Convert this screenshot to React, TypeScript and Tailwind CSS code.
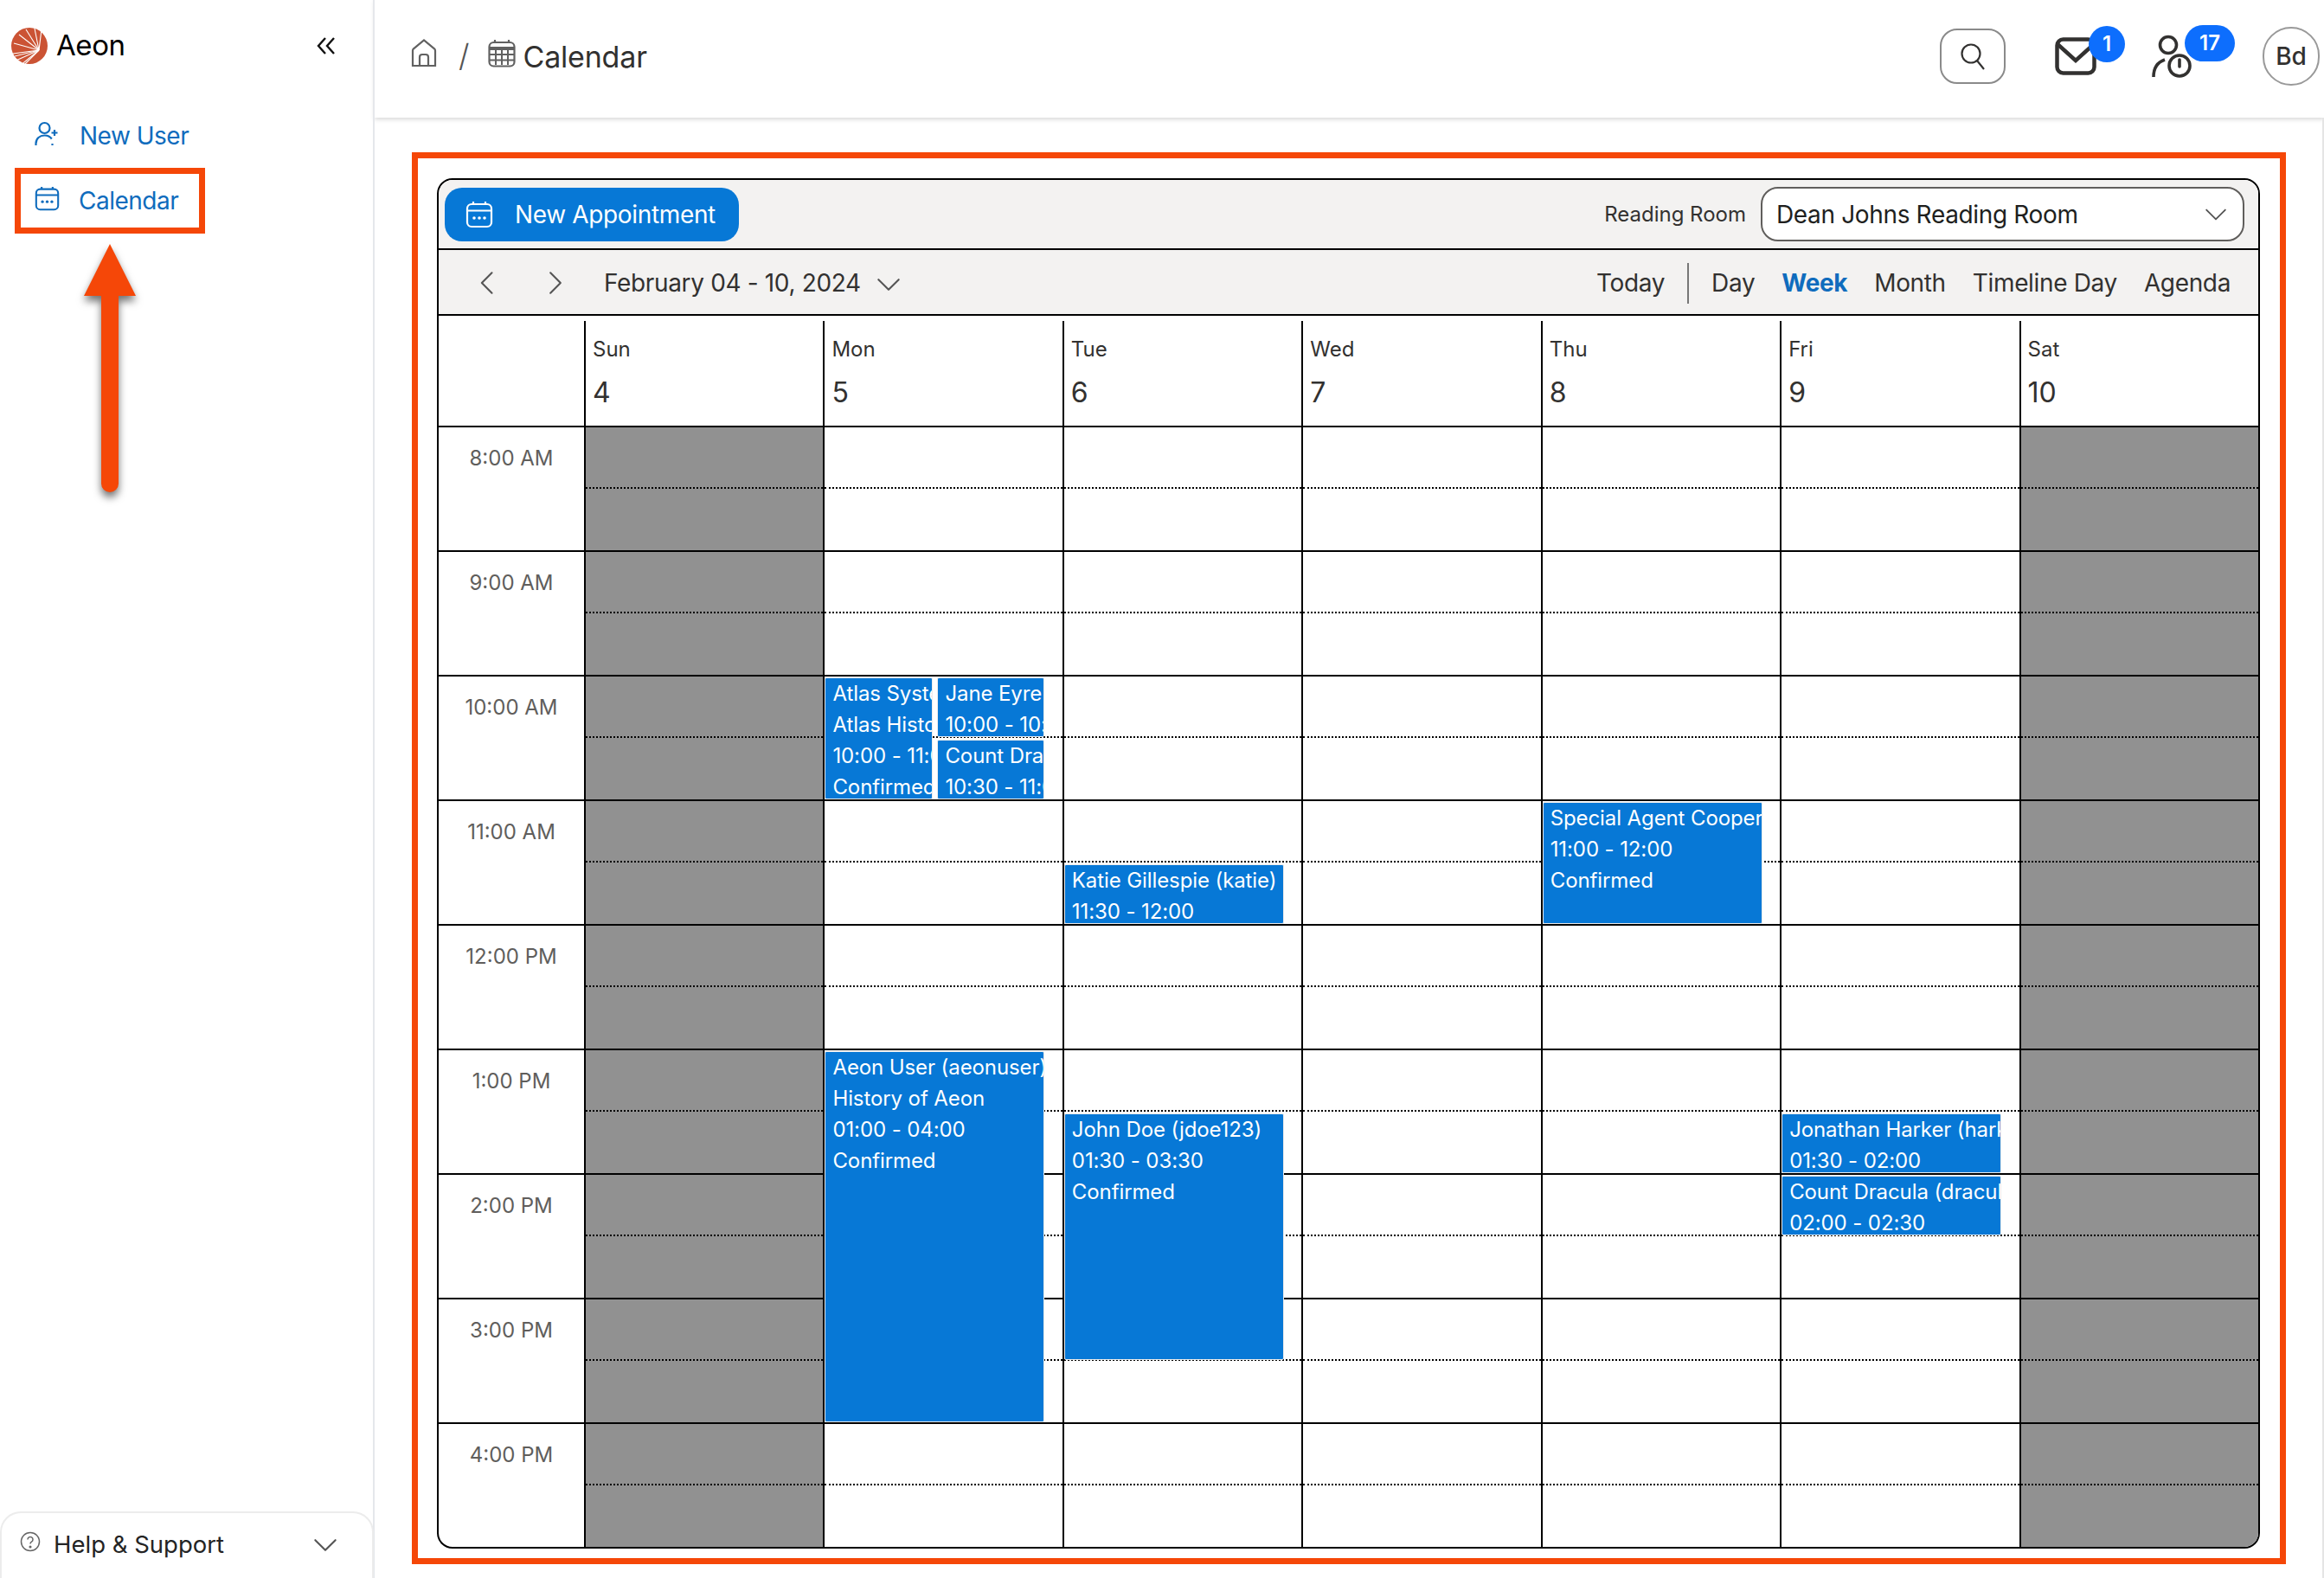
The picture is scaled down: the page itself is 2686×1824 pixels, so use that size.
import React from "react";

const font = { fontFamily: "Inter, 'Noto Sans', sans-serif" };

function Logo() {
  const rays: [number, number][] = [
    [2, 30], [3, 18], [9, 8], [17, 2], [27, 1], [35, 2], [1, 40], [10, 44],
  ];
  return (
    <svg width="42" height="42" viewBox="0 0 42 42" className="shrink-0">
      <circle cx="21" cy="21" r="21" fill="#cb5334" />
      {rays.map(([x, y], i) => (
        <line key={i} x1="32" y1="26" x2={x} y2={y} stroke="#fff" strokeWidth="1.1" />
      ))}
      <line x1="32" y1="26" x2="4" y2="33" stroke="#fff" strokeWidth="1" />
      <line x1="32" y1="26" x2="16" y2="42" stroke="#fff" strokeWidth="1.1" />
    </svg>
  );
}

function CalDots({ color, size = 32, sw = 2.2, className = "" }: { color: string; size?: number; sw?: number; className?: string }) {
  return (
    <svg width={size} height={size} viewBox="0 0 32 32" fill="none" stroke={color} strokeWidth={sw} className={`shrink-0 ${className}`}>
      <rect x="2" y="4" width="28" height="26" rx="5" />
      <path d="M2 11.5H30M9 1V4M23 1V4" />
      <g fill={color} stroke="none">
        <circle cx="10" cy="20" r="1.8" />
        <circle cx="16" cy="20" r="1.8" />
        <circle cx="22" cy="20" r="1.8" />
      </g>
    </svg>
  );
}

function UserPlus() {
  return (
    <svg width="30" height="30" viewBox="0 0 30 30" fill="none" stroke="#0f6cbd" strokeWidth="2.2" className="shrink-0 -mt-[4px]">
      <circle cx="11.5" cy="8" r="6" />
      <path d="M1.5 28v-2c0-6 4.5-9.5 10-9.5 3.5 0 6.5 1.5 8.3 4M20.5 28v-2" />
      <path d="M23 10v7M19.5 13.500h7" />
    </svg>
  );
}

function Chevron({ dir, size, color, sw = 2 }: { dir: "l" | "r" | "d"; size: number; color: string; sw?: number }) {
  const d = dir === "l" ? "M15 2 5 12l10 10" : dir === "r" ? "M7 2l10 10L7 22" : "M2 7l10 10L22 7";
  return (
    <svg width={size} height={size} viewBox="0 0 24 24" fill="none" stroke={color} strokeWidth={sw} strokeLinecap="round" strokeLinejoin="round" className="shrink-0">
      <path d={d} />
    </svg>
  );
}

function Arrow() {
  return (
    <svg width="100" height="320" viewBox="0 0 100 320" className="absolute left-[77px] top-[272px] drop-shadow-[0_6px_5px_rgba(0,0,0,0.55)]">
      <path d="M50 10 80 70H60V287a10 10 0 0 1-20 0V70H20Z" fill="#f54708" />
    </svg>
  );
}

function Sidebar() {
  return (
    <aside className="relative w-[433px] shrink-0 border-r-2 border-[#e5e7eb] flex flex-col">
      <div className="flex items-center h-[106px] pl-[13px] pr-[43px]">
        <Logo />
        <span className="ml-[10px] text-[33px] text-black -tracking-[0.4px]">Aeon</span>
        <svg width="22" height="20" viewBox="0 0 22 20" fill="none" stroke="#111" strokeWidth="2.4" className="ml-auto">
          <path d="M10 1 2 10l8 9M20 1l-8 9 8 9" />
        </svg>
      </div>
      <div className="flex items-center h-[50px] pl-[40px] gap-[22px] mt-[26px] text-[28px] tracking-[-0.5px] text-[#0f6cbd]">
        <UserPlus />
        <span>New User</span>
      </div>
      <div className="flex items-center w-[220px] h-[76px] ml-[17px] mt-[12px] pl-[16px] gap-[22px] border-[7px] border-[#f54708] text-[28px] tracking-[-0.5px] text-[#0f6cbd]">
        <CalDots color="#0f6cbd" size={29} sw={2.300} className="-mt-[6px]" />
        <span>Calendar</span>
      </div>
      <Arrow />
      <div className="mt-auto h-[77px] rounded-t-[24px] border-2 border-b-0 border-[#ececec] flex items-center pb-[2px] pl-[21px] pr-[40px] text-[27.5px] text-[#242424] -mr-[1px]">
        <svg width="24" height="24" viewBox="0 0 24 24" fill="none" stroke="#666" strokeWidth="1.500" className="shrink-0 -mt-[7px]">
          <circle cx="12" cy="12" r="10.500" />
          <path d="M9 9.500a3 3 0 1 1 4.500 2.600c-1 .6-1.500 1.200-1.500 2.400" />
          <circle cx="12" cy="18" r=".8" fill="#666" />
        </svg>
        <span className="ml-[15px]">Help &amp; Support</span>
        <span className="ml-auto"><Chevron dir="d" size={28} color="#555" sw={1.800} /></span>
      </div>
    </aside>
  );
}

function TopBar() {
  return (
    <header className="h-[136px] shrink-0 flex items-center pb-[6px] pl-[41px] pr-[5px] shadow-[0_2px_5px_rgba(0,0,0,0.16)] text-[#323130]">
      <svg width="32" height="33" viewBox="0 0 32 33" fill="none" stroke="#616161" strokeWidth="2.200" className="shrink-0 -mt-[8px]">
        <path d="M3 31h26a2 2 0 0 0 0 0V13.500a3 3 0 0 0-1-2.200L16 1.500 4 11.300a3 3 0 0 0-1 2.200V31Z" />
        <path d="M11 31V21a3 3 0 0 1 3-3h4a3 3 0 0 1 3 3v10" />
      </svg>
      <span className="ml-[24px] text-[36px] font-light text-[#555] -mt-[2px]">/</span>
      <svg width="32" height="33" viewBox="0 0 32 33" fill="none" stroke="#616161" strokeWidth="2.200" className="ml-[21px] shrink-0 -mt-[8px]">
        <rect x="1.500" y="4" width="29" height="27.500" rx="5" />
        <path d="M1.500 11h29" strokeWidth="4" />
        <path d="M8 1v4M24 1v4" />
        <path d="M9 13v17M16 13v17M23 13v17M2 18h28M2 24.500h28" strokeWidth="2" />
      </svg>
      <span className="ml-[9px] text-[34px] text-[#323130] -tracking-[0.2px]">Calendar</span>
      <div className="ml-auto flex items-center">
        <button className="w-[76px] h-[64px] rounded-[20px] border-2 border-[#8a8a8a] flex items-center justify-center">
          <svg width="30" height="32" viewBox="0 0 30 32" fill="none" stroke="#323130" strokeWidth="2.200">
            <circle cx="13" cy="13" r="10.500" />
            <path d="M20 21l8 10" />
          </svg>
        </button>
        <div className="relative ml-[57px] w-[48px] h-[44px]">
          <svg width="48" height="44" viewBox="0 0 48 44" fill="none" stroke="#323130" strokeWidth="4.500">
            <rect x="2.500" y="2.500" width="43" height="39" rx="7" />
            <path d="M3 8l21 19L45 8" />
          </svg>
          <span className="absolute left-[39px] -top-[13px] w-[42px] h-[42px] rounded-full bg-[#0d6efd] text-white text-[24px] font-semibold flex items-center justify-center">1</span>
        </div>
        <div className="relative ml-[64px] w-[50px] h-[50px]">
          <svg width="50" height="50" viewBox="0 0 50 50" fill="none" stroke="#323130" strokeWidth="3.600">
            <circle cx="19" cy="12" r="9.500" />
            <path d="M2 49c0-11 4-17 13-20" />
            <circle cx="32" cy="36" r="12" />
            <path d="M32 29v8" strokeLinecap="round" />
          </svg>
          <span className="absolute left-[38px] -top-[11px] w-[58px] h-[42px] rounded-full bg-[#0d6efd] text-white text-[24px] font-semibold flex items-center justify-center">17</span>
        </div>
        <div className="ml-[78px] w-[66px] h-[68px] rounded-full border-2 border-[#999] flex items-center justify-center text-[28px] font-medium text-[#323130]">Bd</div>
      </div>
    </header>
  );
}

type Ev = { top: number; h: number; left: number; w: number; lines: string[] };

const days: { n: string; d: number; off?: boolean; ev?: Ev[] }[] = [
  { n: "Sun", d: 4, off: true },
  {
    n: "Mon", d: 5,
    ev: [
      { top: 291, h: 141, left: 0, w: 125, lines: ["Atlas Systems (atlas)", "Atlas History of Aeon", "10:00 - 11:00", "Confirmed"] },
      { top: 291, h: 69, left: 130, w: 124, lines: ["Jane Eyre (jeyre)", "10:00 - 10:30"] },
      { top: 363, h: 69, left: 130, w: 124, lines: ["Count Dracula (dracula)", "10:30 - 11:00"] },
      { top: 723, h: 429, left: 0, w: 254, lines: ["Aeon User (aeonuser)", "History of Aeon", "01:00 - 04:00", "Confirmed"] },
    ],
  },
  {
    n: "Tue", d: 6,
    ev: [
      { top: 507, h: 69, left: 0, w: 254, lines: ["Katie Gillespie (katie)", "11:30 - 12:00"] },
      { top: 795, h: 285, left: 0, w: 254, lines: ["John Doe (jdoe123)", "01:30 - 03:30", "Confirmed"] },
    ],
  },
  { n: "Wed", d: 7 },
  {
    n: "Thu", d: 8,
    ev: [{ top: 435, h: 141, left: 0, w: 254, lines: ["Special Agent Cooper (cooper)", "11:00 - 12:00", "Confirmed"] }],
  },
  {
    n: "Fri", d: 9,
    ev: [
      { top: 795, h: 69, left: 0, w: 254, lines: ["Jonathan Harker (harker)", "01:30 - 02:00"] },
      { top: 867, h: 69, left: 0, w: 254, lines: ["Count Dracula (dracula)", "02:00 - 02:30"] },
    ],
  },
  { n: "Sat", d: 10, off: true },
];

const hours = ["8:00 AM", "9:00 AM", "10:00 AM", "11:00 AM", "12:00 PM", "1:00 PM", "2:00 PM", "3:00 PM", "4:00 PM"];

function Event({ e }: { e: Ev }) {
  return (
    <div
      className="absolute z-10 overflow-hidden rounded-[2px] border border-[#ececec] bg-[#0778d6] pl-[8px] text-[24px] leading-[36px] tracking-[-0.1px] text-white whitespace-nowrap"
      style={{ top: e.top, height: e.h, left: e.left, width: e.w }}
    >
      {e.lines.map((l) => (
        <div key={l}>{l}</div>
      ))}
    </div>
  );
}

function Calendar() {
  return (
    <div className="w-[2107px] ml-[22px] mt-[23px] rounded-[18px] border-2 border-black overflow-hidden bg-white">
      <div className="h-[81px] bg-[#f3f2f1] border-b-2 border-black flex items-center pl-[7px] pr-[16px]">
        <button className="w-[340px] h-[62px] rounded-[20px] bg-[#0778d6] flex items-center pl-[24px] gap-[25px] text-[28px] tracking-[-0.35px] text-white">
          <CalDots color="#fff" size={32} sw={2.200} />
          <span>New Appointment</span>
        </button>
        <span className="ml-auto text-[24px] text-[#323130]">Reading Room</span>
        <div className="ml-[17px] w-[559px] h-[63px] rounded-[20px] border-2 border-[#605e5c] bg-white flex items-center pl-[16px] pr-[18px] text-[28px] tracking-[-0.35px] text-[#201f1e]">
          <span>Dean Johns Reading Room</span>
          <span className="ml-auto"><Chevron dir="d" size={26} color="#555" sw={1.700} /></span>
        </div>
      </div>
      <div className="h-[76px] bg-[#f3f2f1] border-b-2 border-black flex items-center pt-[2px] pl-[44px] pr-[32px] text-[28px] tracking-[-0.35px] text-[#323130]">
        <Chevron dir="l" size={28} color="#555" sw={1.800} />
        <span className="ml-[49px]"><Chevron dir="r" size={28} color="#555" sw={1.800} /></span>
        <span className="ml-[42px]">February 04 - 10, 2024</span>
        <span className="ml-[18px] mt-[3px]"><Chevron dir="d" size={28} color="#555" sw={1.800} /></span>
        <div className="ml-auto flex items-center gap-[31px]">
          <span>Today</span>
          <span className="w-[2px] h-[47px] bg-[#777] -mx-[5px]" />
          <span>Day</span>
          <span className="font-bold text-[#0f6cbd]">Week</span>
          <span>Month</span>
          <span>Timeline Day</span>
          <span>Agenda</span>
        </div>
      </div>
      <div className="grid grid-cols-[168px_repeat(7,1fr)] pt-[6px]">
        <div className="h-[121px]" />
        {days.map((d) => (
          <div key={d.n} className="h-[121px] border-l-2 border-black pl-[8px] pt-[17px] text-[#323130]">
            <div className="text-[24px] leading-[32px]">{d.n}</div>
            <div className="text-[32px] leading-[40px] mt-[14px]">{d.d}</div>
          </div>
        ))}
      </div>
      <div className="grid grid-cols-[168px_repeat(7,1fr)]">
        <div>
          {hours.map((h) => (
            <div key={h} className="h-[144px] border-t-2 border-black pt-[20px] text-center text-[24px] leading-[32px] text-[#605e5c]">{h}</div>
          ))}
        </div>
        {days.map((d) => (
          <div key={d.n} className={`relative border-l-2 border-black ${d.off ? "bg-[#919191]" : "bg-white"}`}>
            {hours.map((h) => (
              <div key={h} className="h-[144px] border-t-2 border-black">
                <div className="h-[71px] border-b-2 border-dotted border-black" />
              </div>
            ))}
            {d.ev?.map((e, i) => <Event key={i} e={e} />)}
          </div>
        ))}
      </div>
    </div>
  );
}

export default function App() {
  return (
    <div className="flex w-[2686px] h-[1824px] overflow-hidden bg-white" style={font}>
      <Sidebar />
      <main className="flex-1 flex flex-col min-w-0">
        <TopBar />
        <div className="flex-1 border-r-2 border-[#e5e5e5]">
          <div className="ml-[43px] mt-[40px] w-[2166px] h-[1632px] border-[7px] border-[#f54708]">
            <Calendar />
          </div>
        </div>
      </main>
    </div>
  );
}
